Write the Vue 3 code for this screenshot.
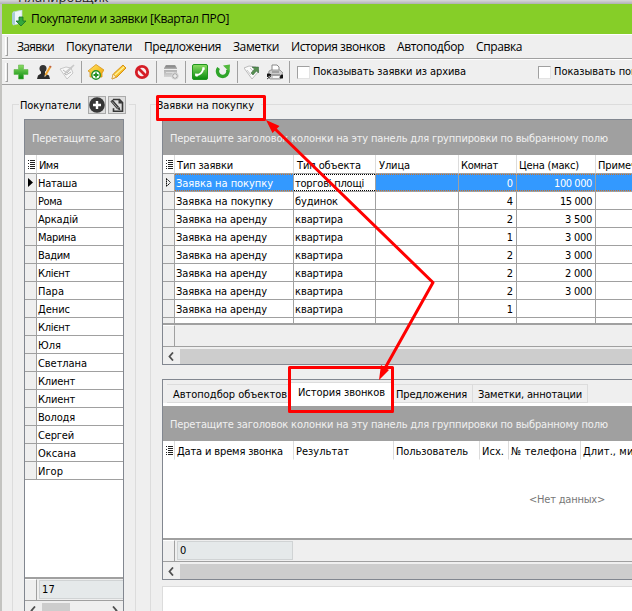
<script setup>
// Spreads the letters of a label over the width given in pixels.
const vFit = {
  mounted(el, { value }) {
    if (!value) return
    const natural = el.getBoundingClientRect().width
    el.style.letterSpacing = (value - natural) / el.textContent.length + 'px'
  },
}

const menu = [
  ['Заявки', 37], ['Покупатели', 66], ['Предложения', 77], ['Заметки', 46],
  ['История звонков', 94], ['Автоподбор', 67], ['Справка', 46],
]
const people = [
  ['Наташа', 39], ['Рома', 24], ['Аркадій', 40], ['Марина', 38], ['Вадим', 32],
  ['Клієнт', 32], ['Пара', 26], ['Денис', 32], ['Клієнт', 32], ['Юля', 23],
  ['Светлана', 49], ['Клиент', 37], ['Клиент', 37], ['Володя', 37],
  ['Сергей', 36], ['Оксана', 38], ['Игор', 25],
]
const buy = ['Заявка на покупку', 97]
const rent = ['Заявка на аренду', 91]
const flat = ['квартира', 48]
const requests = [
  [buy, ['торгові площі', 69], '0', ['100 000', 38]],
  [buy, ['будинок', 43], '4', ['15 000', 32]],
  [rent, flat, '2', ['3 500', 27]],
  [rent, flat, '1', ['3 000', 27]],
  [rent, flat, '2', ['3 000', 27]],
  [rent, flat, '2', ['2 000', 27]],
  [rent, flat, '2', ['3 000', 27]],
  [rent, flat, '1', ['', 0]],
]
const requestHeads = [
  ['Тип заявки', 56], ['Тип объекта', 64], ['Улица', 31], ['Комнат', 37],
  ['Цена (макс)', 60], ['Примечание', 63],
]
const callHeads = [
  ['Дата и время звонка', 106], ['Результат', 53], ['Пользователь', 72],
  ['Исх.', 22], ['№ телефона', 66], ['Длит., мин', 57],
]
const groupHint = 'Перетащите заголовок колонки на эту панель для группировки по выбранному полю'
</script>

<template>
  <div class="screen">
    <div class="behind"><span>Планировщик</span></div>
    <div class="window">
      <header class="title">
        <svg width="16" height="18" viewBox="0 0 16 18">
          <path d="M2 2 11 0v13L2 15z" fill="#eef6fa" stroke="#bcd4dd" stroke-width=".7" />
          <path d="M1 3 4 2v13l-3-1z" fill="#a9cbd8" />
          <path d="M8 7h4v4h3l-5 5-5-5h3z" fill="#35a83b" stroke="#16702a" stroke-width=".8" />
        </svg>
        <span v-fit="198" class="t">Покупатели и заявки [Квартал ПРО]</span>
      </header>

      <nav class="menu">
        <i class="grip"></i>
        <span v-for="m in menu" :key="m[0]" v-fit="m[1]" class="t">{{ m[0] }}</span>
      </nav>

      <div class="tools">
        <i class="grip"></i>
        <svg class="ico first" viewBox="0 0 16 16">
          <defs>
            <linearGradient id="gr" x2="0" y2="1"><stop stop-color="#8bdc63" /><stop offset="1" stop-color="#078b0d" /></linearGradient>
            <linearGradient id="ye" x2="1" y2="1"><stop stop-color="#ffe968" /><stop offset="1" stop-color="#f0a000" /></linearGradient>
            <linearGradient id="ga" x2="0" y2="1"><stop stop-color="#999" /><stop offset="1" stop-color="#d4d4d4" /></linearGradient>
          </defs>
          <path d="M5.500 1h5v4.500H15v5h-4.500V15h-5v-4.500H1v-5h4.500z" fill="url(#gr)" stroke="#61b64c" stroke-width=".6" />
        </svg>
        <svg class="ico" viewBox="0 0 16 16">
          <circle cx="7" cy="4.500" r="3.500" fill="#333" />
          <path d="M5 7h4v2.500l4 2 1 3.500H1l1-3.500 3-2z" fill="#2b2b2b" />
          <path d="m9.500 11 5-8.500" stroke="#f2a42c" stroke-width="2" />
          <path d="m8.500 13 .2-2.300 1.700 1z" fill="#fbe4b2" />
          <path d="m14 3.300.8-1.300" stroke="#bd6247" stroke-width="2" />
        </svg>
        <svg class="ico" viewBox="0 0 16 16" fill="none" stroke="#c8c8c8">
          <path d="m1 5 6-2 5 1 2 5-6 6z" fill="#f7f7f7" />
          <path d="m4 6 4 3 7-8M5 9l2 2 5-3" stroke="#b8b8b8" />
          <path d="m6 10 1-2 8-7" stroke-width="1.500" stroke="#c9c9c9" />
        </svg>
        <i class="sep"></i>
        <svg class="ico" viewBox="0 0 16 16">
          <path d="M0 7 8 .5 16 6l-2 3v4H2V8z" fill="url(#ye)" stroke="#d89216" stroke-width=".8" />
          <circle cx="8" cy="11" r="4.200" fill="#fff" stroke="#219022" stroke-width="1.400" />
          <path d="M8 8.500v5M5.500 11h5" stroke="#219022" stroke-width="1.800" />
        </svg>
        <svg class="ico" viewBox="0 0 16 16">
          <path d="m1 15 1.300-5L12 1l3 3-9 9z" fill="url(#ye)" stroke="#d79012" />
          <path d="m4 11 9-8" stroke="#fff39e" stroke-width="1.200" />
          <path d="m2 10 3 3-4 2z" fill="#fff0c6" stroke="#c98b28" stroke-width=".5" />
        </svg>
        <svg class="ico" viewBox="0 0 16 16" fill="none" stroke="#d51d26" stroke-width="2.800">
          <circle cx="8" cy="8" r="5.700" fill="#f8eeee" /><path d="m4 4 8 8" />
        </svg>
        <i class="sep"></i>
        <svg class="ico" viewBox="0 0 16 16">
          <path d="M3 1h9l2 3v9H1V4z" fill="url(#ga)" />
          <path d="M3 1.500h9l1 2H2z" fill="#8d8d8d" /><path d="M1 5.500h13" stroke="#eee" /><path d="M3 8.500h8" stroke="#ddd" />
          <circle cx="12" cy="12" r="3.300" fill="#aaa" stroke="#ddd" /><path d="M12 10v4M10 12h4" stroke="#fff" />
        </svg>
        <i class="sep"></i>
        <svg class="ico" viewBox="0 0 16 16">
          <rect x=".5" y=".5" width="15" height="15" rx="1.500" fill="url(#gr)" stroke="#21961f" />
          <path d="M3.500 11q6 .5 8-6.500" stroke="#fff" stroke-width="1.800" fill="none" />
          <path d="m3 9.500 3 .3-.5 3-2-.6zM10.500 3l2.300.5-.3 2.500-2.200-.2z" fill="#fff" />
        </svg>
        <svg class="ico" viewBox="0 0 16 16">
          <path d="M3.600 4a5.200 5.200 0 1 0 9 1.500" fill="none" stroke="#2fa52a" stroke-width="3.400" />
          <path d="M8 1.500 15 .5l-.5 7.500z" fill="#51b83c" />
        </svg>
        <i class="sep"></i>
        <svg class="ico" viewBox="0 0 16 16">
          <path d="m0 4 5-2 7 1 3 4-7 8z" fill="#fafafa" stroke="#bbb" />
          <path d="m3 6 4 5M6 4l3 3" stroke="#c8c8c8" />
          <path d="M8 3h6.500v6l-2-2-3.500 4-2-2 3.500-4z" fill="#568f50" stroke="#305e38" stroke-width=".5" />
        </svg>
        <svg class="ico" viewBox="0 0 16 16">
          <path d="M5 7V1h5l2 2v4" fill="#fff" stroke="#888" />
          <path d="m2 7 2-1h9l3 3v4l-3 2H3l-2-2z" fill="#ccc" stroke="#888" stroke-width=".8" />
          <path d="M5 8h7M4 11h9" stroke="#777" /><path d="M6 12h6v2H6z" fill="#f7f7f7" />
          <path d="M0 10h3l1 1-3 1v1l-1-1M0 15l4-3M14 11h2v3h-3z" fill="#111" stroke="#111" stroke-width=".8" />
        </svg>
        <i class="sep last"></i>
        <i class="check"></i><span v-fit="153" class="t">Показывать заявки из архива</span>
        <i class="check far"></i><span v-fit="83" class="t">Показывать пок</span>
      </div>

      <main>
        <section class="group buyers">
          <div class="legend">
            <span v-fit="61" class="t">Покупатели</span>
            <svg class="btn push" viewBox="0 0 18 18">
              <rect x=".5" y=".5" width="17" height="17" fill="#ddd" stroke="#aaa" />
              <circle cx="9" cy="9" r="7.800" fill="#363636" />
              <path d="M9 5v8M5 9h8" stroke="#fff" stroke-width="2.400" />
            </svg>
            <svg class="btn" viewBox="0 0 18 18">
              <rect x=".5" y=".5" width="17" height="17" fill="#ddd" stroke="#aaa" />
              <path d="M5 3.500h6.500l3 3v8.700H5.500v-3" fill="none" stroke="#363636" stroke-width="1.600" />
              <path d="M10.500 3v4.500H15z" fill="#363636" />
              <path d="m3.500 4.500 6.500 7.500" stroke="#363636" stroke-width="2.800" /><path d="m9 13 3.500 1.500-1-3.500z" fill="#363636" />
              <path d="m4 5.500 5.500 6.300" stroke="#ddd" stroke-width=".6" />
            </svg>
          </div>
          <div class="grid">
            <div class="banner"><span v-fit="438" class="t">{{ groupHint }}</span></div>
            <div class="row head">
              <div class="ind"><svg class="list" viewBox="0 0 7 9"><path d="M0 .5h1M2 .5h5M0 3.500h1M2 2.500h5M2 4.500h5M0 6.500h1M2 6.500h5M0 8.500h1M2 8.500h5" stroke="#222" /></svg></div>
              <div class="name"><span v-fit="19" class="t">Имя</span></div>
            </div>
            <div v-for="(p, i) in people" :key="i" class="row">
              <div class="ind"><svg v-if="i === 0" class="mark" viewBox="0 0 5 9"><path d="M0 0v9l5-4.500z" /></svg></div>
              <div class="name"><span v-fit="p[1]" class="t">{{ p[0] }}</span></div>
            </div>
            <div class="blank"></div>
            <div class="foot"><div class="ind"></div><div class="field"><span v-fit="13" class="t">17</span></div></div>
            <div class="scroll">
              <svg viewBox="0 0 6 9"><path d="M5 .5 1.500 4.500 5 8.500" /></svg><i class="thumb"></i>
              <svg class="right" viewBox="0 0 6 9"><path d="m1 .5 3.500 4L1 8.500" /></svg>
            </div>
          </div>
        </section>

        <section class="group requests">
          <div class="legend"><span v-fit="97" class="t">Заявки на покупку</span></div>
          <div class="grid upper">
            <div class="banner"><span v-fit="438" class="t">{{ groupHint }}</span></div>
            <div class="row head reqcols">
              <div class="ind"><svg class="list" viewBox="0 0 7 9"><path d="M0 .5h1M2 .5h5M0 3.500h1M2 2.500h5M2 4.500h5M0 6.500h1M2 6.500h5M0 8.500h1M2 8.500h5" stroke="#222" /></svg></div>
              <div v-for="h in requestHeads" :key="h[0]"><span v-fit="h[1]" class="t">{{ h[0] }}</span></div>
            </div>
            <div v-for="(r, i) in requests" :key="i" class="row reqcols" :class="{ selected: i === 0 }">
              <div class="ind"><svg v-if="i === 0" class="mark" viewBox="0 0 5 9"><path d="M.5 .5v8L4.500 4.500z" fill="none" stroke="#111" stroke-dasharray="1.500 .5" /></svg></div>
              <div><span v-fit="r[0][1]" class="t">{{ r[0][0] }}</span></div>
              <div :class="{ focus: i === 0 }"><span v-fit="r[1][1]" class="t">{{ r[1][0] }}</span></div>
              <div></div>
              <div class="num"><span class="t">{{ r[2] }}</span></div>
              <div class="num"><span v-fit="r[3][1]" class="t">{{ r[3][0] }}</span></div>
              <div></div>
            </div>
            <div class="row reqcols stub"><div class="ind"></div><div v-for="n in 6" :key="n"></div></div>
            <div class="foot"><div class="ind"></div></div>
            <div class="scroll wide"><svg viewBox="0 0 6 9"><path d="M5 .5 1.500 4.500 5 8.500" /></svg><i class="thumb"></i></div>
          </div>

          <div class="grid lower">
            <div class="tabs">
              <div class="tab"><span v-fit="114" class="t">Автоподбор объектов</span></div>
              <div class="tab active"><span v-fit="87" class="t">История звонков</span></div>
              <div class="tab"><span v-fit="71" class="t">Предложения</span></div>
              <div class="tab"><span v-fit="104" class="t">Заметки, аннотации</span></div>
            </div>
            <div class="banner"><span v-fit="438" class="t">{{ groupHint }}</span></div>
            <div class="row head callcols">
              <div class="ind"><svg class="list" viewBox="0 0 7 9"><path d="M0 .5h1M2 .5h5M0 3.500h1M2 2.500h5M2 4.500h5M0 6.500h1M2 6.500h5M0 8.500h1M2 8.500h5" stroke="#222" /></svg></div>
              <div v-for="h in callHeads" :key="h[0]"><span v-fit="h[1]" class="t">{{ h[0] }}</span></div>
            </div>
            <div class="empty"><span v-fit="76" class="t">&lt;Нет данных&gt;</span></div>
            <div class="foot"><div class="ind"></div><div class="field"><span class="t">0</span></div></div>
            <div class="scroll wide"><svg viewBox="0 0 6 9"><path d="M5 .5 1.500 4.500 5 8.500" /></svg><i class="thumb"></i></div>
          </div>
          <div class="extra"></div>
        </section>
      </main>
    </div>

    <svg class="notes" viewBox="0 0 632 611">
      <g fill="none" stroke="#f00" stroke-width="3" stroke-linejoin="round">
        <rect x="157.500" y="96.500" width="107" height="23" />
        <rect x="289.500" y="367.500" width="103" height="44" />
        <path d="M273 127 433 282.500 384 370" />
      </g>
      <path d="m266 120 13.500 6-7 7zM379 380l2-15 8 5z" fill="#f00" />
    </svg>
  </div>
</template>

<style>
body { background: #efefef; overflow: hidden; }
</style>

<style scoped>
* { box-sizing: border-box; }
.screen {
  position: relative; width: 632px; height: 611px; overflow: hidden;
  display: flex; flex-direction: column; background: #efefef; color: #000;
  font: 11px/14px "DejaVu Sans Condensed", "DejaVu Sans", sans-serif; font-stretch: condensed;
}
.t { display: inline-block; white-space: pre; flex: none; }
.behind { height: 4px; flex: none; overflow: hidden; background: linear-gradient(#d8d8da, #b0b0b2); padding-left: 18px; }
.behind span { display: block; font: 13px/14px "Open Sans", sans-serif; margin-top: -10px; color: #222; }
.window { flex: 1; min-height: 0; display: flex; flex-direction: column; border-left: 2px solid #c3c3c0; }
.title {
  height: 30px; flex: none; display: flex; align-items: center; gap: 4px; padding-left: 9px;
  background: #86ce28; font: 12px/16px "Open Sans", sans-serif;
}
.menu {
  height: 25px; flex: none; display: flex; align-items: center; gap: 12px; padding-left: 3px;
  border-top: 1px solid #fff; border-bottom: 1px solid #a0a0a0; font: 12px/16px "Open Sans", sans-serif;
}
.grip { width: 3px; height: 19px; border-right: 1px solid #a0a0a0; border-bottom: 1px solid #a0a0a0; border-left: 1px solid #fff; flex: none; }
.menu .grip { margin-right: -3px; }
.tools { height: 26px; flex: none; display: flex; align-items: center; padding-left: 3px; border-top: 1px solid #fff; border-bottom: 1px solid #a0a0a0; }
.ico { width: 16px; height: 16px; flex: none; margin-right: 7px; }
.ico.first { margin-left: 5px; }
.sep { width: 1px; height: 22px; background: #a0a0a0; flex: none; margin: 0 6px 0 -1px; }
.sep.last { margin-right: 7px; }
.check { width: 13px; height: 13px; flex: none; background: #fff; border: 1px solid #a0a0a0; border-right-color: #e3e3e3; border-bottom-color: #e3e3e3; margin-right: 3px; }
.check.far { margin-left: 72px; }

main { flex: 1; min-height: 0; display: flex; align-items: flex-start; padding: 19px 0 0 10px; overflow: hidden; }
.group { height: 530px; flex: none; border: 1px solid #dcdcdc; display: flex; flex-direction: column; align-items: flex-start; }
.buyers { width: 124px; }
.requests { width: 520px; margin-left: 14px; }
.legend { height: 20px; flex: none; margin: -10px 0 4px 6px; background: #efefef; display: flex; align-items: center; }
.legend .t { padding-top: 1px; }
.buyers .legend { width: 110px; padding-left: 1px; }
.requests .legend { width: 104px; }
.btn { width: 18px; height: 18px; flex: none; margin-left: 2px; }
.btn.push { margin-left: 7px; }

.grid { flex: none; background: #fff; border: 1px solid #828790; margin-left: 11px; }
.buyers .grid { width: 100px; height: 520px; display: flex; flex-direction: column; overflow: hidden; }
.requests .grid { width: 500px; }
.banner { height: 35px; flex: none; overflow: hidden; background: #a0a0a0; border-right: 2px solid #a0a0a0; color: #f0f0f0; padding-left: 7px; display: flex; align-items: center; padding-top: 2px; }
.row { display: flex; height: 18px; flex: none; }
.row > div { border-right: 1px solid #a0a0a0; border-bottom: 1px solid #a0a0a0; padding-left: 1px; display: flex; align-items: center; flex: none; overflow: hidden; padding-top: 3px; }
.row > .ind { width: 12px; background: #efefef; justify-content: center; padding: 0; }
.row > .name { width: 87px; border-right: 0; }
.row.head { height: 19px; }
.row.head > div { background: #fff; border-right-color: #dcdcdc; padding-left: 2px; }
.list { width: 7px; height: 9px; }
.mark { width: 5px; height: 9px; }
.blank { height: 97px; flex: none; }
.reqcols > :nth-child(2) { width: 119px; }
.reqcols > :nth-child(3) { width: 82px; }
.reqcols > :nth-child(4) { width: 83px; }
.reqcols > :nth-child(5) { width: 58px; }
.reqcols > :nth-child(6) { width: 79px; }
.reqcols > :nth-child(7) { width: 65px; }
.row > .num { justify-content: flex-end; padding-right: 3px; }
.reqcols.head > :nth-child(3), .reqcols.head > :nth-child(4) { padding-left: 3px; }
.selected > div:not(.ind) { background: repeating-linear-gradient(90deg, #d07020 0 1px, #3399ff 1px 2px) top / 100% 1px no-repeat, repeating-linear-gradient(90deg, #d07020 0 1px, #3399ff 1px 2px) bottom / 100% 1px no-repeat, #3399ff; background-clip: padding-box; background-origin: padding-box; color: #fff; }
.selected > div.focus:not(.ind) { background: repeating-linear-gradient(90deg, #000 0 1px, #fff 1px 2px) top / 100% 1px no-repeat, repeating-linear-gradient(90deg, #000 0 1px, #fff 1px 2px) bottom / 100% 1px no-repeat, #fff; color: #000; }
.row.stub { height: 5px; }
.row.stub > div { border-bottom: 0; padding: 0; }
.foot { height: 24px; flex: none; background: #efefef; border-top: 2px solid #a0a0a0; border-bottom: 1px solid #a0a0a0; display: flex; align-items: center; }
.foot .ind { width: 12px; flex: none; height: 100%; border-right: 1px solid #a0a0a0; border-top: 1px solid #fff; }
.field { height: 19px; margin-left: 2px; width: 116px; flex: none; border: 1px solid #d0d3d4; background: #e5e9ea; padding: 1px 0 0 2px; display: flex; align-items: center; }
.scroll { height: 17px; flex: none; background: #efefef; display: flex; align-items: center; padding: 1px 5px 0; }
.scroll svg { width: 6px; height: 9px; flex: none; fill: none; stroke: #505050; stroke-width: 1.8; }
.thumb { width: 28px; height: 15px; background: #cdcdcd; margin-left: 6px; }
.wide .thumb { flex: 1; }
.scroll .right { margin-left: auto; }
.grid.lower { margin-top: 14px; }
.tabs { height: 26px; background: #efefef; border-bottom: 3px solid #fff; display: flex; align-items: flex-end; padding-left: 4px; }
.tab { height: 19px; border: 1px solid #dcdcdc; border-left: 0; display: flex; align-items: center; padding: 2px 0 0 6px; overflow: hidden; flex: none; }
.tab:nth-child(1) { width: 124px; }
.tab.active { width: 102px; height: 21px; background: #fff; border-bottom: 0; padding: 0 0 1px 7px; }
.tab:nth-child(3) { width: 80px; padding-left: 3px; }
.tab:nth-child(4) { width: 115px; padding-left: 5px; }
.callcols.head > div { border-bottom-color: #fff; }
.callcols > :nth-child(2) { width: 119px; }
.callcols > :nth-child(3) { width: 100px; }
.callcols > :nth-child(4) { width: 86px; }
.callcols > :nth-child(5) { width: 29px; }
.callcols > :nth-child(6) { width: 72px; }
.callcols > :nth-child(7) { width: 80px; }
.empty { height: 78px; display: flex; justify-content: flex-start; align-items: center; padding: 2px 0 0 366px; color: #777; }
.extra { width: 500px; height: 60px; flex: none; margin: 6px 0 0 11px; background: #fff; border: 1px solid #dcdcdc; }
.notes { position: absolute; inset: 0; width: 632px; height: 611px; pointer-events: none; }
</style>
